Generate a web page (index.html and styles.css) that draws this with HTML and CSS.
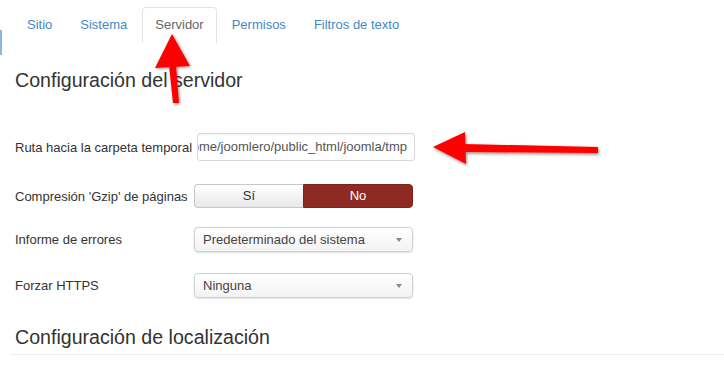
FILE: index.html
```html
<!DOCTYPE html>
<html lang="es">
<head>
    <meta charset="UTF-8">
    <title>Configuración global - Servidor</title>
    <link rel="stylesheet" href="styles.css">
</head>
<body>
    <div id="page">
        <ul class="tabs">
            <li><a href="#">Sitio</a></li>
            <li><a href="#">Sistema</a></li>
            <li class="active"><a href="#">Servidor</a></li>
            <li><a href="#">Permisos</a></li>
            <li><a href="#">Filtros de texto</a></li>
        </ul>

        <h2 class="section-title">Configuración del servidor</h2>

        <div class="form">
            <div class="row row-tmp">
                <label>Ruta hacia la carpeta temporal</label>
                <div class="text-input"><span>/home/joomlero/public_html/joomla/tmp</span></div>
            </div>
            <div class="row row-gzip">
                <label>Compresión 'Gzip' de páginas</label>
                <div class="toggle">
                    <span class="opt">Sí</span>
                    <span class="opt on">No</span>
                </div>
            </div>
            <div class="row row-err">
                <label>Informe de errores</label>
                <div class="select">Predeterminado del sistema<i class="caret"></i></div>
            </div>
            <div class="row row-https">
                <label>Forzar HTTPS</label>
                <div class="select">Ninguna<i class="caret"></i></div>
            </div>
        </div>

        <h2 class="section-title locale">Configuración de localización</h2>
        <hr class="rule">

        <!-- annotation arrows -->
        <svg class="arrow arrow-up" width="60" height="90" viewBox="0 0 60 90">
            <defs>
                <filter id="sh1" x="-30%" y="-30%" width="160%" height="160%">
                    <feDropShadow dx="1" dy="1" stdDeviation="1.5" flood-color="#000" flood-opacity="0.45"/>
                </filter>
            </defs>
            <g filter="url(#sh1)">
                <polygon points="22,4 5,38 40,36" fill="#f00"/>
                <polygon points="19,35 26,35 29,73 23,73" fill="#f00"/>
            </g>
        </svg>
        <svg class="arrow arrow-left" width="190" height="50" viewBox="0 0 190 50">
            <defs>
                <filter id="sh2" x="-20%" y="-40%" width="140%" height="180%">
                    <feDropShadow dx="1" dy="1.5" stdDeviation="1.5" flood-color="#000" flood-opacity="0.45"/>
                </filter>
            </defs>
            <g filter="url(#sh2)">
                <polygon points="13,22 45,7 46,39" fill="#f00"/>
                <polygon points="44,19 178,22 178,28 44,27" fill="#f00"/>
            </g>
        </svg>
    </div>
</body>
</html>
```

FILE: styles.css
```css
* {
    margin: 0;
    padding: 0;
    box-sizing: border-box;
}

body {
    font-family: 'Liberation Sans', Arial, sans-serif;
    font-size: 13px;
    color: #333;
    background: #fff;
}

#page {
    position: relative;
    width: 724px;
    height: 384px;
    overflow: hidden;
}

/* leftover sidebar edge */
#page::before {
    content: "";
    position: absolute;
    left: 0;
    top: 30px;
    width: 2px;
    height: 25px;
    background: #8db6dc;
}

.tabs {
    list-style: none;
    display: flex;
    padding-left: 14px;
    margin-top: 7px;
    height: 36px;
}

.tabs li {
    margin-right: 2px;
}

.tabs a {
    display: block;
    height: 36px;
    line-height: 34px;
    padding: 0 12px;
    color: #3f88c8;
    text-decoration: none;
    border: 1px solid transparent;
    border-bottom: none;
    border-radius: 4px 4px 0 0;
}

.tabs .active a {
    color: #666;
    border-color: #e4e4e4;
}

.section-title {
    font-size: 19.6px;
    font-weight: normal;
    color: #333;
    margin: 25px 0 0 15px;
    line-height: 24px;
}

.form {
    margin-top: 41px;
    padding-left: 15px;
}

.row {
    display: flex;
    align-items: center;
}

.row label {
    width: 179px;
    color: #333;
    white-space: nowrap;
}

.row-tmp {
    height: 28px;
}

.row-gzip {
    margin-top: 23px;
    height: 24px;
}

.row-err {
    margin-top: 19px;
    height: 25px;
}

.row-https {
    margin-top: 21px;
    height: 25px;
}

.text-input {
    display: flex;
    justify-content: flex-end;
    overflow: hidden;
    margin-left: 3px;
    width: 218px;
    height: 28px;
    line-height: 26px;
    padding: 0 7px 0 6px;
    border: 1px solid #d9d9d9;
    border-radius: 3px;
    color: #555;
    white-space: nowrap;
    box-shadow: inset 0 1px 1px rgba(0, 0, 0, 0.05);
}

.text-input span {
    flex-shrink: 0;
}

.toggle {
    display: flex;
    width: 219px;
    height: 24px;
}

.toggle .opt {
    flex: 1;
    text-align: center;
    line-height: 22px;
    border: 1px solid #c8c8c8;
    color: #333;
    background: linear-gradient(to bottom, #fff, #e9e9e9);
}

.toggle .opt:first-child {
    border-radius: 4px 0 0 4px;
    border-right: none;
}

.toggle .opt.on {
    color: #fff;
    background: #8f2a22;
    border-color: #7d241d;
    border-radius: 0 4px 4px 0;
}

.select {
    position: relative;
    width: 219px;
    height: 25px;
    line-height: 23px;
    padding-left: 8px;
    border: 1px solid #cfcfcf;
    border-radius: 4px;
    color: #444;
    background: linear-gradient(to bottom, #fff, #f3f3f3);
    box-shadow: 0 1px 2px rgba(0, 0, 0, 0.12);
}

.caret {
    position: absolute;
    right: 10px;
    top: 10px;
    border-left: 3px solid transparent;
    border-right: 3px solid transparent;
    border-top: 4px solid #888;
}

.section-title.locale {
    margin-top: 27px;
}

.rule {
    border: none;
    border-top: 1px solid #eee;
    margin: 5px 0 0 10px;
}

.arrow {
    position: absolute;
}

.arrow-up {
    left: 150px;
    top: 30px;
}

.arrow-left {
    left: 420px;
    top: 125px;
}
```
